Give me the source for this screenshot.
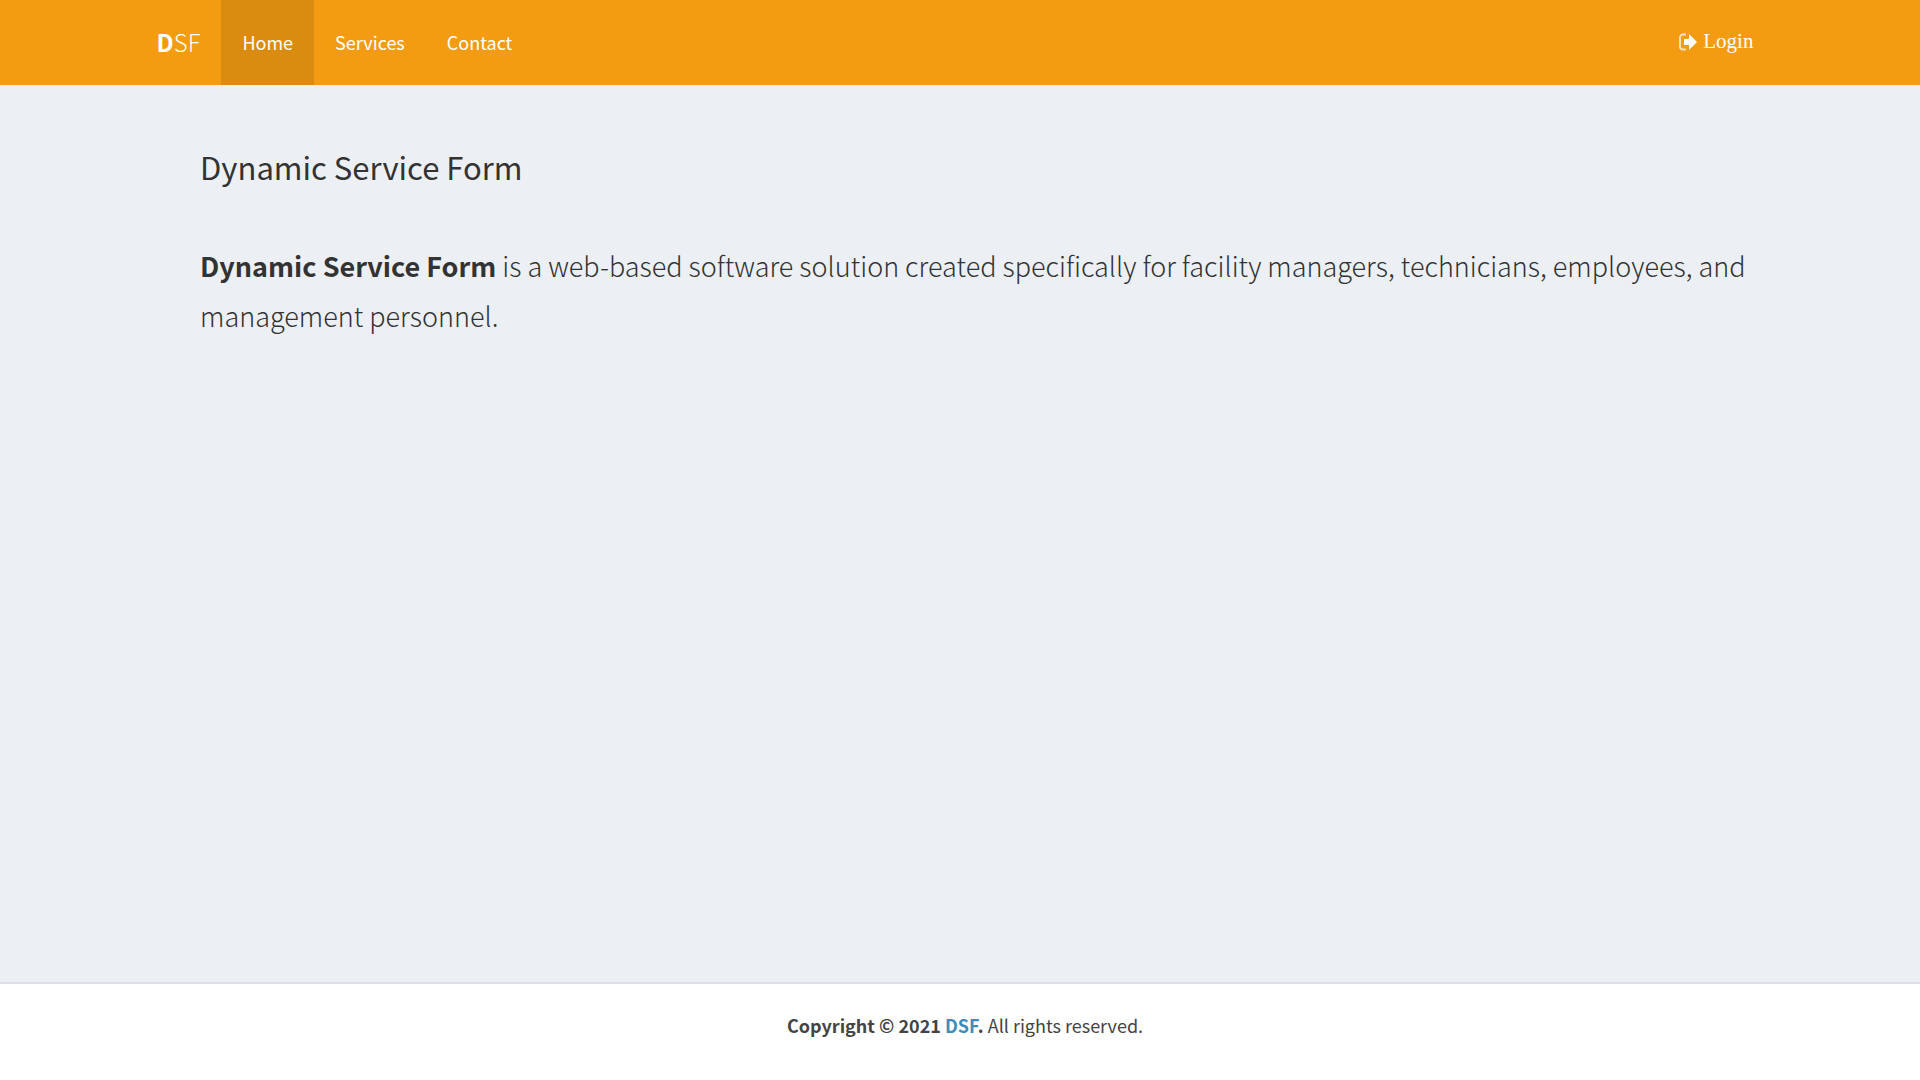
<svelte:head><title>DSF</title></svelte:head>

<div class="page">
  <header>
    <nav class="bar" aria-label="Main">
      <a class="brand" href="#home"><span><b>D</b>SF</span></a>
      <a class="item active" href="#home" aria-current="page">Home</a>
      <a class="item" href="#services">Services</a>
      <a class="item" href="#contact">Contact</a>
      <a class="login" href="#login">
        <svg viewBox="0 0 20 18" aria-hidden="true">
          <path d="M8 1.500H5A3 3 0 0 0 2 4.500V13.500A3 3 0 0 0 5 16.500H8" fill="none" stroke="currentColor" stroke-width="2" opacity="0.7" />
          <path d="M11 1l8 8-8 8v-5H6V6h5z" fill="currentColor" />
        </svg>
        Login
      </a>
    </nav>
  </header>
  <main>
    <h1>Dynamic Service Form</h1>
    <p><b>Dynamic Service Form</b> is a web-based software solution created specifically for facility managers, technicians, employees, and management personnel.</p>
  </main>
  <footer>
    <b>Copyright © 2021 <a href="#home">DSF</a>.</b> All rights reserved.
  </footer>
</div>

<style>
  :global(body) { margin: 0; }
  .page {
    display: flex;
    flex-direction: column;
    min-height: 100vh;
    background: #ecf0f5;
    color: #333;
    font-family: "Noto Sans CJK SC", "Open Sans", sans-serif;
  }
  header { background: #f39c12; }
  .bar {
    display: flex;
    align-items: stretch;
    height: 85px;
    margin: 0 8%;
  }
  a { text-decoration: none; }
  b { font-weight: 700; }
  .bar a {
    display: flex;
    align-items: center;
    padding-bottom: 2px;
    color: #fff;
  }
  .bar .brand { padding: 0 21px 2px 3px; font-size: 24px; font-weight: 300; }
  .bar .item { padding: 0 21px 2px; font-size: 18px; font-weight: 400; }
  .bar .active { background: #da8c10; }
  .bar .login {
    margin-left: auto;
    padding-right: 13px;
    gap: 5px;
    font-family: "Liberation Serif", serif;
    font-size: 21px;
  }
  svg { width: 20px; height: 18px; }
  main { flex: 1; padding: 56px 160px 0 200px; }
  h1 { margin: 0; font-size: 31px; line-height: 52px; font-weight: 400; }
  p { margin: 48px 0 0; font-size: 27px; line-height: 50px; font-weight: 300; }
  footer {
    padding: 27px 0 41px 10px;
    border-top: 2px solid #dce1e9;
    background: #fff;
    color: #444;
    font-size: 18px;
    line-height: 28px;
    text-align: center;
  }
  footer a { color: #3c8dbc; }
</style>
